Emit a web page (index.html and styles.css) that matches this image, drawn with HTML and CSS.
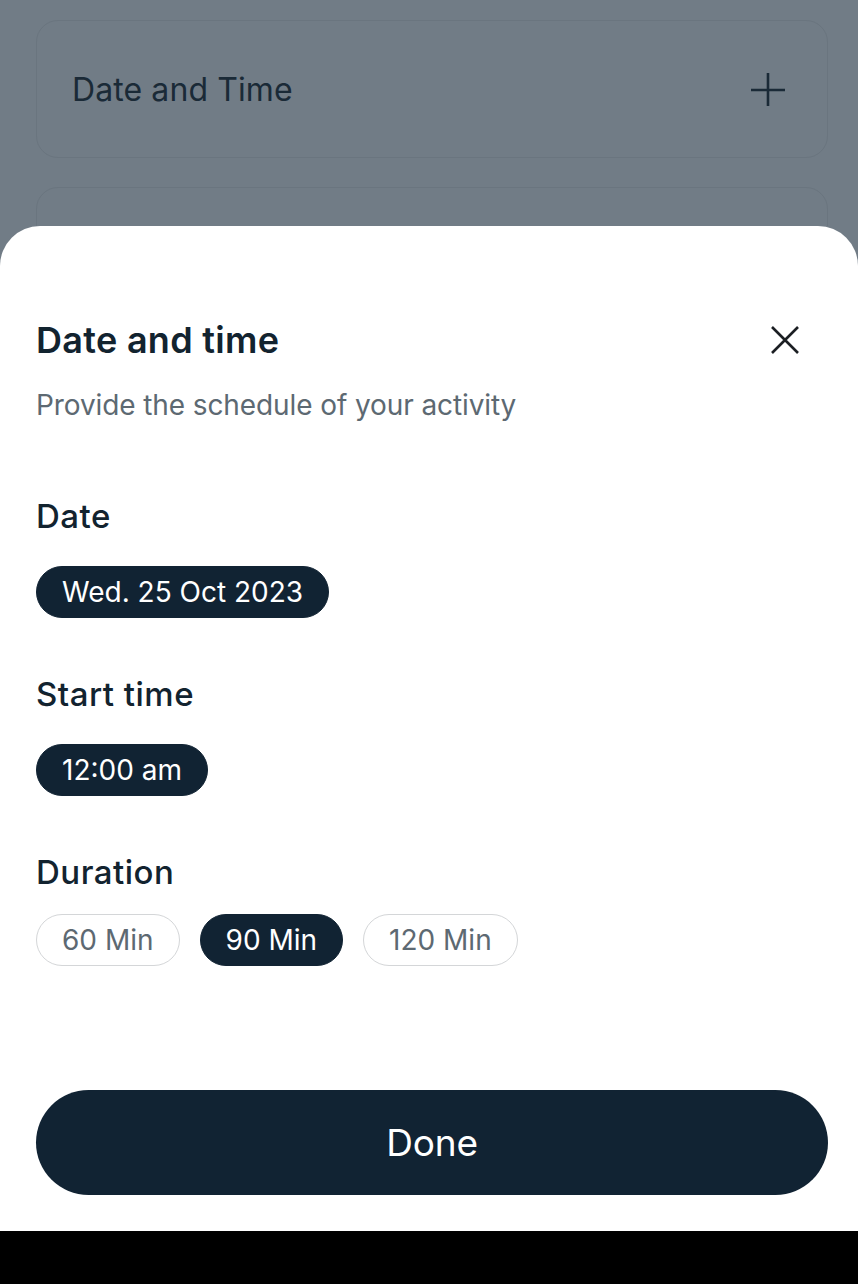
FILE: index.html
```html
<!DOCTYPE html>
<html lang="en">
<head>
    <meta charset="UTF-8">
    <meta name="viewport" content="width=device-width, initial-scale=1.0">
    <title>Date and time</title>
    <link rel="stylesheet" href="styles.css">
</head>
<body>
    <div class="backdrop">
        <div class="field-card">
            <span class="field-label">Date and Time</span>
            <svg class="plus-icon" viewBox="0 0 34 34" width="34" height="34">
                <path d="M17 1 V35 M0 18 H34" stroke="currentColor" stroke-width="2.6" fill="none"/>
            </svg>
        </div>
        <div class="field-card"></div>
    </div>

    <div class="sheet">
        <div class="sheet-head">
            <h1>Date and time</h1>
            <svg class="close-icon" viewBox="0 0 28 28" width="28" height="28">
                <path d="M1 1 L27 27 M27 1 L1 27" stroke="currentColor" stroke-width="2.6" fill="none"/>
            </svg>
        </div>
        <p class="subtitle">Provide the schedule of your activity</p>

        <div class="section">
            <h2>Date</h2>
            <div class="chips">
                <span class="chip active">Wed. 25 Oct 2023</span>
            </div>
        </div>

        <div class="section">
            <h2>Start time</h2>
            <div class="chips">
                <span class="chip active">12:00 am</span>
            </div>
        </div>

        <div class="section">
            <h2>Duration</h2>
            <div class="chips tight">
                <span class="chip">60 Min</span>
                <span class="chip active">90 Min</span>
                <span class="chip">120 Min</span>
            </div>
        </div>

        <button class="done-btn">Done</button>
    </div>

    <div class="nav-bar"></div>
</body>
</html>
```

FILE: styles.css
```css
body {
    margin: 0;
    font-family: Inter, 'Noto Sans', sans-serif;
    background-color: #717c86;
    height: 1284px;
    overflow: hidden;
    display: flex;
    flex-direction: column;
}
.backdrop {
    height: 226px;
    overflow: hidden;
    padding: 20px 30px 0 36px;
    box-sizing: border-box;
    display: flex;
    flex-direction: column;
    gap: 29px;
}
.field-card {
    height: 138px;
    flex-shrink: 0;
    border: 1.5px solid #6a757f;
    border-radius: 22px;
    box-sizing: border-box;
    display: flex;
    align-items: center;
    justify-content: space-between;
    padding: 0 42px 0 35px;
    color: #1a2a37;
}
.field-label {
    font-size: 32px;
    letter-spacing: 0.1px;
}
.plus-icon {
    display: block;
}
.sheet {
    flex: 1;
    background-color: #fff;
    border-radius: 40px 40px 0 0;
    padding: 93px 30px 0 36px;
    display: flex;
    flex-direction: column;
    color: #12232f;
}
.sheet-head {
    display: flex;
    align-items: center;
    justify-content: space-between;
    padding-right: 29px;
}
.sheet-head h1 {
    margin: 0;
    font-size: 36px;
    font-weight: 600;
    letter-spacing: 0.3px;
    line-height: 42px;
}
.close-icon {
    display: block;
    color: #1b1f23;
}
.subtitle {
    margin: 27px 0 0;
    font-size: 28px;
    color: #5d6972;
    letter-spacing: -0.1px;
    line-height: 34px;
}
.section {
    margin-top: 76px;
}
.section + .section {
    margin-top: 58px;
}
.section h2 {
    margin: 0;
    font-size: 33px;
    font-weight: 500;
    letter-spacing: 0.5px;
    line-height: 36px;
}
.chips {
    display: flex;
    gap: 20px;
    margin-top: 32px;
}
.chips.tight {
    margin-top: 24px;
}
.chip {
    height: 52px;
    box-sizing: border-box;
    display: inline-flex;
    align-items: center;
    padding: 0 25px;
    border-radius: 26px;
    border: 1.5px solid #d4d6d8;
    font-size: 28px;
    letter-spacing: 0;
    color: #5d6972;
}
.chip.active {
    background-color: #112333;
    border-color: #112333;
    color: #fff;
}
.done-btn {
    margin-top: auto;
    margin-bottom: 36px;
    height: 105px;
    border: none;
    border-radius: 53px;
    background-color: #112333;
    color: #fff;
    font-family: Inter, 'Noto Sans', sans-serif;
    font-size: 37px;
    letter-spacing: -0.2px;
    cursor: pointer;
}
.nav-bar {
    height: 53px;
    background-color: #000;
    flex-shrink: 0;
}
```
